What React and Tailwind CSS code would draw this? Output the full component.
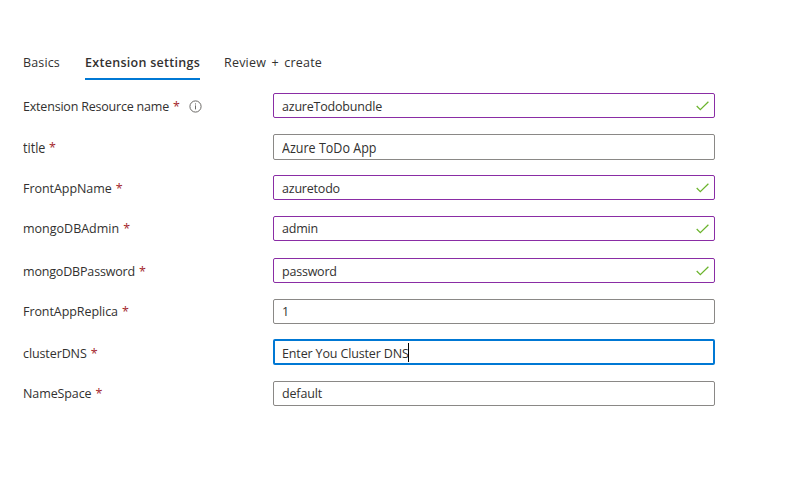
const CheckMark = () => (
  <svg className="mr-[5px] h-[10px] w-[13px] shrink-0" viewBox="0 0 13 10" fill="none">
    <path d="M0.7 5L4.3 8.6L12.4 0.8" stroke="#6bb42d" strokeWidth="1.25" />
  </svg>
);

const InfoIcon = () => (
  <svg className="ml-[9px] h-[13px] w-[13px]" viewBox="0 0 13 13" fill="none">
    <circle cx="6.5" cy="6.5" r="5.6" stroke="#6b6966" strokeWidth="1" />
    <path d="M6.5 5.4V9.4M6.5 3.4V4.5" stroke="#6b6966" strokeWidth="1" />
  </svg>
);

const purple = 'h-[25px] border-[#8a2da5]';
const gray = 'h-[25px] border-[#8a8886]';

const rows = [
  { label: 'Extension Resource name', value: 'azureTodobundle', valid: true, info: true, row: 'mt-[13px]', box: purple, lt: 'tracking-[-0.2px]', vt: 'tracking-[-0.2px]', shift: 'pt-0.5' },
  { label: 'title', value: 'Azure ToDo App', row: 'mt-4', box: 'h-[26px] border-[#8a8886]', lt: 'text-[14px] w-[22px] origin-left scale-x-90', vt: 'text-[14px] origin-left scale-x-[0.895]', shift: 'pt-px' },
  { label: 'FrontAppName', value: 'azuretodo', valid: true, row: 'mt-[15px]', box: purple, lt: 'tracking-[-0.05px]', vt: 'tracking-[-0.2px]', shift: 'pt-0.5' },
  { label: 'mongoDBAdmin', value: 'admin', valid: true, row: 'mt-4', box: purple, lt: '', vt: 'tracking-[-0.2px]', shift: '' },
  { label: 'mongoDBPassword', value: 'password', valid: true, row: 'mt-[17px]', box: purple, lt: 'tracking-[-0.17px]', vt: 'tracking-[-0.22px]', shift: 'pt-0.5' },
  { label: 'FrontAppReplica', value: '1', row: 'mt-4', box: gray, lt: 'tracking-[-0.07px]', vt: '', shift: '' },
  { label: 'clusterDNS', value: 'Enter You Cluster DNS', focused: true, row: 'mt-[15px]', box: 'h-[26px] border-[#0078d4]', lt: 'tracking-[-0.1px]', vt: 'tracking-[-0.14px]', shift: 'pt-[3px] -mb-px' },
  { label: 'NameSpace', value: 'default', row: 'mt-4', box: gray, lt: 'tracking-[-0.1px]', vt: 'tracking-[-0.15px]', shift: '' },
];

export default function App() {
  return (
    <div className="h-[481px] w-[797px] overflow-hidden bg-white pl-[23px] pt-[53px] font-['Open_Sans','Noto_Sans',sans-serif] text-[12.5px] leading-5 text-[#323130]">
      <nav className="flex h-[27px] whitespace-nowrap">
        <div className="w-[62px] tracking-[0.15px]"><span>Basics</span></div>
        <div className="mr-6 w-[115px] border-b-2 border-[#0078d4] font-semibold tracking-[0.29px]"><span>Extension settings</span></div>
        <div className="tracking-[0.2px] [word-spacing:2px]"><span>Review + create</span></div>
      </nav>
      {rows.map((r) => (
        <div key={r.label} className={`flex items-center ${r.row}`}>
          <div className={`flex w-[250px] items-center whitespace-nowrap ${r.shift}`}>
            <span className={r.lt}>{r.label}</span>
            <span className="ml-1 text-[12.5px] font-medium text-[#a4262c]">*</span>
            {r.info && <InfoIcon />}
          </div>
          <div className={`flex w-[442px] items-center justify-between rounded-[2px] ${r.focused ? 'border-2 pl-[7px]' : 'border pl-2'} ${r.box}`}>
            <div className={`flex items-center whitespace-nowrap ${r.shift}`}>
              <span className={r.vt}>{r.value}</span>
              {r.focused && <span className="-ml-px -mt-[3px] h-[19px] w-px bg-black" />}
            </div>
            {r.valid && <CheckMark />}
          </div>
        </div>
      ))}
    </div>
  );
}
